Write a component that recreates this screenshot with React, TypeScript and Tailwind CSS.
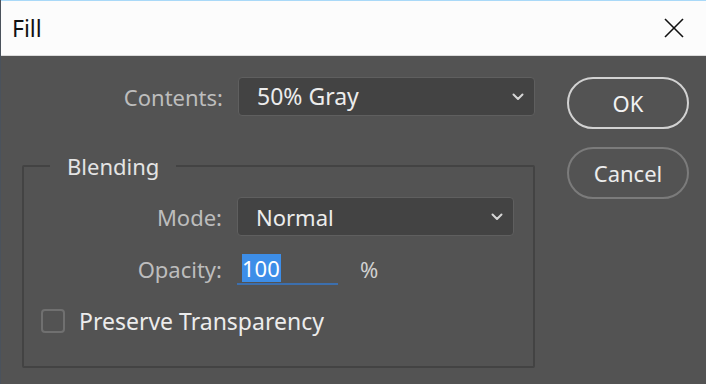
import React from 'react';

const font = { fontFamily: '"Noto Sans", "Open Sans", sans-serif' };

const Chevron = () => (
  <svg width="12" height="8" viewBox="0 0 12 8" fill="none">
    <polyline points="1.5,1.5 6,6 10.5,1.5" stroke="#d6d6d6" strokeWidth="2" strokeLinecap="round" strokeLinejoin="round" />
  </svg>
);

const Select = ({ value, width, size }: { value: string; width: string; size: string }) => (
  <div className={`${width} h-[39px] flex items-center justify-between pl-[18px] pr-[10px] bg-[#434343] border border-[#5f5f5f] rounded-[4px]`}>
    <span className={`${size} text-[#ececec] leading-none`}>{value}</span>
    <Chevron />
  </div>
);

export default function App() {
  return (
    <div className="w-[706px] h-[384px] bg-[#535353] flex flex-col border-l border-[#4a525c] overflow-hidden" style={font}>
      {/* title bar */}
      <div className="h-[56px] shrink-0 bg-[#fcfcfc] border-t border-[#a9d9f8] border-b border-b-[#dcdcdc] flex items-center justify-between pl-[11px] pr-[22px]">
        <span className="text-[23px] text-[#111] leading-none">Fill</span>
        <svg width="20" height="20" viewBox="0 0 20 20">
          <line x1="1" y1="1" x2="19" y2="19" stroke="#111" strokeWidth="1.6" />
          <line x1="19" y1="1" x2="1" y2="19" stroke="#111" strokeWidth="1.6" />
        </svg>
      </div>

      <div className="flex pl-[21px] pt-[21px]">
        <div className="w-[513px] flex flex-col">
          <div className="flex items-center">
            <span className="w-[201px] text-right text-[22px] text-[#bdbdbd] leading-none">Contents:</span>
            <div className="ml-[15px]">
              <Select value="50% Gray" width="w-[297px]" size="text-[23px]" />
            </div>
          </div>

          <fieldset className="mt-[38px] h-[214px] border-2 border-[#434343] rounded-[2px]">
            <legend className="ml-[26px] px-[17px] text-[22px] text-[#e4e4e4] leading-[24px]">Blending</legend>
            <div className="flex items-center mt-[19px]">
              <span className="w-[198px] text-right text-[22px] text-[#bdbdbd] leading-none">Mode:</span>
              <div className="ml-[15px]">
                <Select value="Normal" width="w-[277px]" size="text-[22px]" />
              </div>
            </div>
            <div className="flex items-center mt-[17px]">
              <span className="w-[198px] text-right text-[22px] text-[#bdbdbd] leading-none">Opacity:</span>
              <div className="ml-[15px] w-[101px] h-[32px] flex items-center pl-[5px] border-b-2 border-[#3c6fae]">
                <span className="bg-[#3d8ee8] text-[#ffffff] text-[22px] leading-[28px] pr-[1px]">100</span>
              </div>
              <span className="ml-[22px] text-[22px] text-[#d0d0d0] leading-none">%</span>
            </div>
            <div className="flex items-center mt-[24px] pl-[17px]">
              <div className="w-[24px] h-[24px] rounded-[4px] border-2 border-[#707070]" />
              <span className="ml-[14px] text-[23px] text-[#ececec] leading-none">Preserve Transparency</span>
            </div>
          </fieldset>
        </div>

        <div className="ml-[32px] flex flex-col gap-[18px]">
          <button className="w-[122px] h-[52px] rounded-full border-2 border-[#d2d2d2] text-[22px] text-[#f2f2f2]">OK</button>
          <button className="w-[122px] h-[52px] rounded-full border-2 border-[#7b7b7b] text-[22px] text-[#ececec]">Cancel</button>
        </div>
      </div>
    </div>
  );
}
